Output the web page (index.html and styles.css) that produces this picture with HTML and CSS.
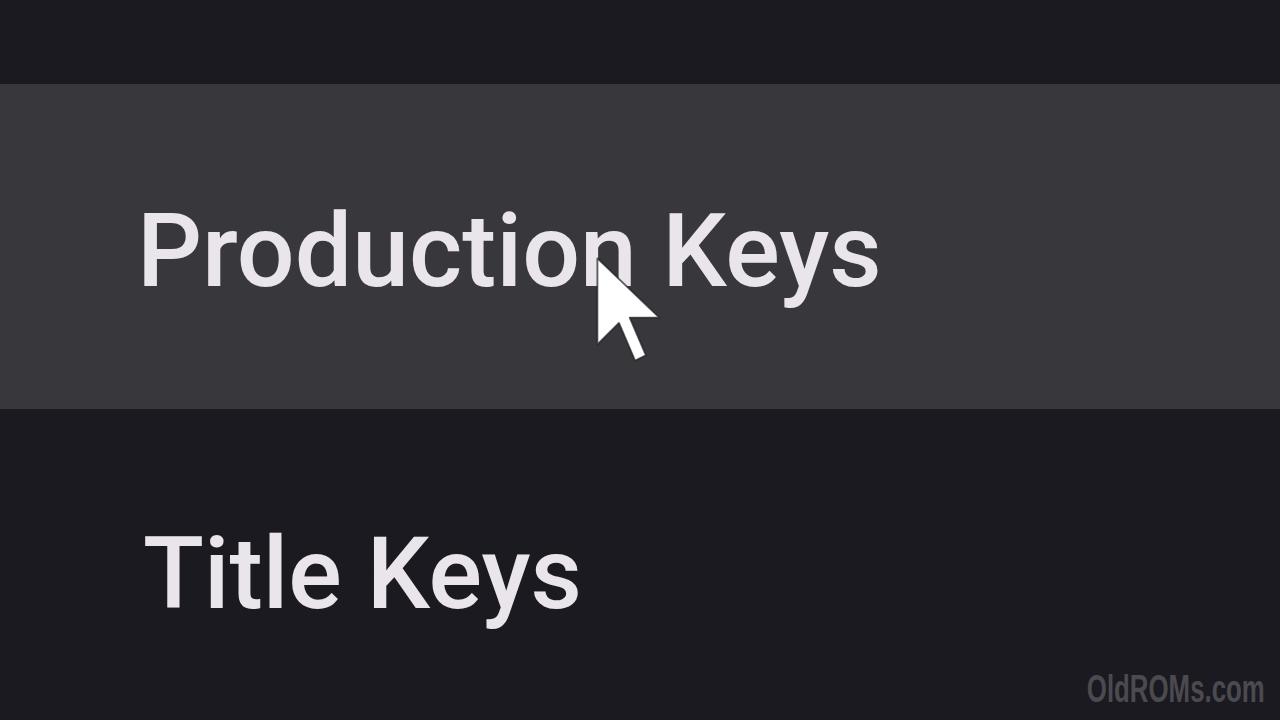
FILE: index.html
```html
<!DOCTYPE html>
<html>
<head>
<meta charset="utf-8">
<link rel="stylesheet" href="styles.css">
</head>
<body>
<div class="screen">
  <div class="spacer"></div>
  <div class="row active">
    <span class="label">Production Keys</span>
    <svg class="cursor" viewBox="0 0 13 21" width="70" height="113">
      <path d="M1 1 L1 17 L5 13 L8 20 L10 19 L7 12 L12.5 12 Z" fill="#ffffff" stroke="#1e1e22" stroke-opacity="0.7" stroke-width="0.35" stroke-linejoin="round"/>
    </svg>
  </div>
  <div class="row">
    <span class="label second">Title Keys</span>
  </div>
  <div class="watermark">OldROMs.com</div>
</div>
</body>
</html>
```

FILE: styles.css
```css
html, body {
  margin: 0;
  padding: 0;
  background: #1b1a20;
}
.screen {
  position: relative;
  width: 1280px;
  height: 720px;
  overflow: hidden;
  background: #1b1a20;
  font-family: Roboto, "Liberation Sans", sans-serif;
}
.spacer {
  height: 84px;
}
.row {
  position: relative;
  height: 325px;
  display: flex;
  align-items: center;
  padding-left: 137px;
  box-sizing: border-box;
}
.row.active {
  background: #38373b;
}
.label {
  color: #e9e5ea;
  font-size: 102px;
  font-weight: 500;
  letter-spacing: 0;
  line-height: 1;
  margin-top: 8px;
}
.label.second {
  font-size: 100px;
  margin-left: 6px;
  margin-top: 4px;
}
.cursor {
  position: absolute;
  left: 592px;
  top: 169px;
}
.watermark {
  position: absolute;
  right: 15px;
  bottom: 12px;
  font-family: "Liberation Sans", sans-serif;
  font-weight: 700;
  font-size: 38px;
  line-height: 1;
  color: #4a4a50;
  transform: scaleX(0.68);
  transform-origin: right center;
}
```
